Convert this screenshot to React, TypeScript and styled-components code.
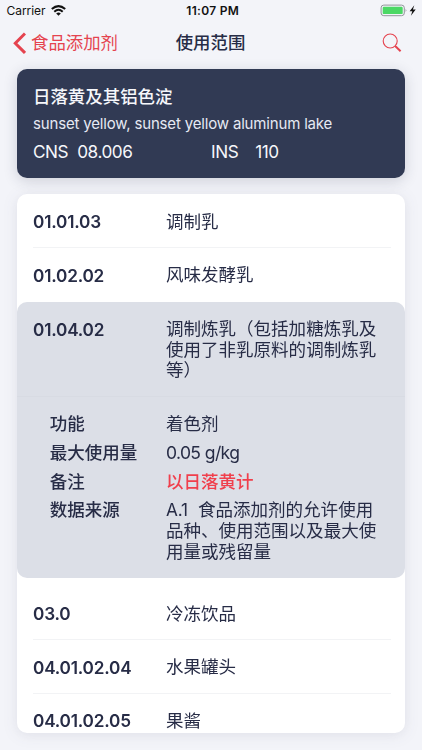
import React from "react";
import styled, { createGlobalStyle } from "styled-components";

const ink = "#272c46";
const red = "#e5434f";

const GlobalStyle = createGlobalStyle`
  * { box-sizing: border-box; }
  html, body { margin: 0; height: 100%; background: #f3f4f9; }
  body {
    overflow: hidden;
    font-family: Inter, "Noto Sans CJK SC", sans-serif;
    color: ${ink};
  }
`;

const Screen = styled.div`
  display: flex;
  flex-direction: column;
  width: 422px;
  height: 750px;
  overflow: hidden;
  background: #f3f4f9;
`;

const StatusBar = styled.div`
  display: grid;
  grid-template-columns: 1fr auto 1fr;
  align-items: center;
  height: 21px;
  padding: 0 5px 0 6.5px;
  color: #111;
  font-size: 12px;
  line-height: 21px;
`;

const Carrier = styled.div`
  display: flex;
  align-items: center;
  gap: 6px;
  letter-spacing: -0.05px;
`;

const Clock = styled.div`
  padding-left: 2px;
  font-weight: 600;
  letter-spacing: 0.3px;
`;

const Power = styled.div`
  display: flex;
  justify-content: flex-end;
  align-items: center;
`;

const NavBar = styled.div`
  display: grid;
  grid-template-columns: 1fr auto 1fr;
  align-items: center;
  height: 44px;
  padding: 0 13px;
`;

const Back = styled.div`
  display: flex;
  align-items: center;
  gap: 5px;
  color: ${red};
  font-size: 17.4px;
  line-height: 24px;
  font-weight: 400;
`;

const Title = styled.div`
  padding-right: 1px;
  font-size: 17.4px;
  line-height: 24px;
  font-weight: 500;
`;

const SearchSlot = styled.div`
  display: flex;
  justify-content: flex-end;
  padding-right: 7px;
`;

const Summary = styled.section`
  height: 108.6px;
  margin: 4.4px 16.7px 0 16.5px;
  padding: 15.6px 16.5px;
  border-radius: 10px;
  background: #313a54;
  color: #f6f7fb;
  box-shadow: 0 3px 14px rgba(40, 45, 70, 0.18);
`;

const Name = styled.div`
  font-size: 17.45px;
  line-height: 24px;
  font-weight: 500;
`;

const English = styled.div`
  margin-top: 3px;
  color: #e6e9f3;
  font-size: 15px;
  line-height: 24px;
  letter-spacing: -0.17px;
  white-space: nowrap;
`;

const Codes = styled.div`
  display: grid;
  grid-template-columns: 178px 1fr;
  margin-top: 4px;
  font-size: 17.2px;
  line-height: 24px;
`;

const Code = styled.div<{ $gap: number }>`
  display: flex;
  gap: ${(p) => p.$gap}px;
  letter-spacing: -0.45px;
`;

const List = styled.section`
  height: 539px;
  margin: 16.4px 16.7px 0 16.5px;
  overflow: hidden;
  border-radius: 10px;
  background: #fff;
`;

const ListShadow = styled.div`
  filter: drop-shadow(0 2px 7px rgba(45, 50, 80, 0.1));
`;

const Row = styled.div<{ $line?: boolean }>`
  display: grid;
  grid-template-columns: 132.9px 1fr;
  height: 53.7px;
  margin: 0 14px 0 16px;
  padding: 16.8px 0 0 0.5px;
  border-bottom: 1px solid ${(p) => (p.$line ? "#f2f3f5" : "transparent")};
`;

const Number = styled.div`
  font-size: 17.2px;
  line-height: 21px;
  font-weight: 600;
  letter-spacing: -0.2px;
`;

const Food = styled.div`
  padding-top: 0.5px;
  font-size: 17.55px;
  line-height: 20.7px;
  white-space: pre-line;
`;

const Expanded = styled.div`
  height: 276px;
  border-radius: 10px;
  background: #dcdfe7;
`;

const ExpandedHead = styled.div`
  display: grid;
  grid-template-columns: 132.9px 1fr;
  height: 95px;
  padding: 16.8px 0 0 16.5px;
  border-bottom: 1px solid #d8dbe3;
`;

const Details = styled.dl`
  display: grid;
  grid-template-columns: 116.2px 1fr;
  row-gap: 8.1px;
  margin: 0;
  padding: 17.2px 0 0 33.2px;
  line-height: 20.7px;
`;

const Label = styled.dt`
  font-size: 17.5px;
  font-weight: 500;
`;

const Value = styled.dd<{ $alert?: boolean; $tracking?: number }>`
  margin: 0;
  color: ${(p) => (p.$alert ? "#f03f4c" : ink)};
  font-size: 17.55px;
  font-weight: ${(p) => (p.$alert ? 500 : 400)};
  letter-spacing: ${(p) => p.$tracking ?? 0}px;
  white-space: pre-line;
`;

const SourceLine = styled.div`
  display: flex;
  gap: 10px;
`;

const Latin = styled.span`
  font-size: 17.2px;
  letter-spacing: -0.1px;
`;

const Spacer = styled.div`
  height: 8.5px;
`;

const before = [
  ["01.01.03", "调制乳"],
  ["01.02.02", "风味发酵乳"],
];
const after = [
  ["03.0", "冷冻饮品"],
  ["04.01.02.04", "水果罐头"],
  ["04.01.02.05", "果酱"],
];

function WifiIcon() {
  return (
    <svg width="15" height="11" viewBox="0 0 15 11" fill="none" stroke="#111" strokeWidth="2">
      <path d="M.8 4.1Q7.5-1.9 14.2 4.1M3.3 6.7Q7.5 2.9 11.7 6.7" />
      <path d="M5.2 8.5Q7.5 6.5 9.8 8.5L7.5 10.8Z" fill="#111" stroke="none" />
    </svg>
  );
}

function BatteryIcon() {
  return (
    <svg width="37" height="13" viewBox="0 0 37 13">
      <rect x="1.1" y="1.1" width="23.2" height="10.6" rx="2.7" fill="none" stroke="#92959a" />
      <rect x="2.7" y="2.7" width="20" height="7.4" rx="1.2" fill="#4bd865" />
      <path d="M25.6 4.7Q27.4 6.4 25.6 8.1Z" fill="#92959a" />
      <path d="M34.3 1.2 29.6 7.2H32.3L30.9 11.7 35.7 5.6H32.9Z" fill="#111" />
    </svg>
  );
}

function SearchIcon() {
  return (
    <svg width="20" height="20" viewBox="0 0 20 20" fill="none" stroke={red}>
      <circle cx="8.2" cy="8" r="7" strokeWidth="1.1" />
      <path d="m13 12.8 1.2 1.2" strokeWidth="1.1" />
      <path d="m13.7 13.5 4.9 4.7" strokeWidth="2" />
    </svg>
  );
}

export default function App() {
  return (
    <>
      <GlobalStyle />
      <Screen>
        <StatusBar>
          <Carrier>Carrier <WifiIcon /></Carrier>
          <Clock>11:07 PM</Clock>
          <Power><BatteryIcon /></Power>
        </StatusBar>
        <NavBar>
          <Back>
            <svg width="13" height="22" viewBox="0 0 13 22" fill="none" stroke={red} strokeWidth="3">
              <path d="M12 1.5 2.3 11.2 12 20.9" />
            </svg>
            食品添加剂
          </Back>
          <Title>使用范围</Title>
          <SearchSlot><SearchIcon /></SearchSlot>
        </NavBar>
        <Summary>
          <Name>日落黄及其铝色淀</Name>
          <English>sunset yellow, sunset yellow aluminum lake</English>
          <Codes>
            <Code $gap={9}><span>CNS</span><span>08.006</span></Code>
            <Code $gap={17}><span>INS</span><span>110</span></Code>
          </Codes>
        </Summary>
        <ListShadow>
          <List>
            {before.map(([code, food], i) => (
              <Row key={code} $line={i === 0}>
                <Number>{code}</Number>
                <Food>{food}</Food>
              </Row>
            ))}
            <Expanded>
              <ExpandedHead>
                <Number>01.04.02</Number>
                <Food>{"调制炼乳（包括加糖炼乳及\n使用了非乳原料的调制炼乳\n等）"}</Food>
              </ExpandedHead>
              <Details>
                <Label>功能</Label>
                <Value>着色剂</Value>
                <Label>最大使用量</Label>
                <Value $tracking={-0.6}>0.05 g/kg</Value>
                <Label>备注</Label>
                <Value $alert>以日落黄计</Value>
                <Label>数据来源</Label>
                <Value>
                  <SourceLine><Latin>A.1</Latin><span>食品添加剂的允许使用</span></SourceLine>
                  {"品种、使用范围以及最大使\n用量或残留量"}
                </Value>
              </Details>
            </Expanded>
            <Spacer />
            {after.map(([code, food]) => (
              <Row key={code} $line>
                <Number>{code}</Number>
                <Food>{food}</Food>
              </Row>
            ))}
          </List>
        </ListShadow>
      </Screen>
    </>
  );
}
